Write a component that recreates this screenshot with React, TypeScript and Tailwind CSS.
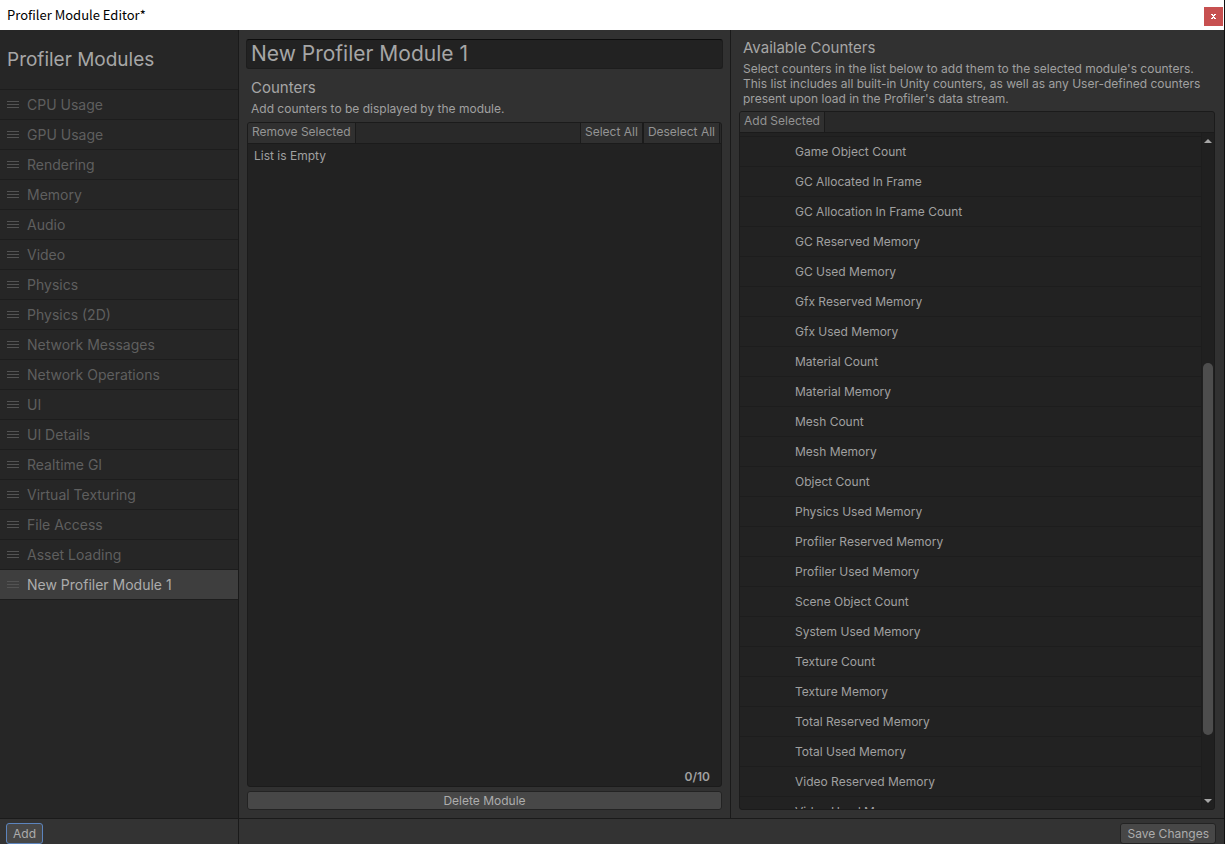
import { useState } from "react";

const builtInModules = [
  "CPU Usage",
  "GPU Usage",
  "Rendering",
  "Memory",
  "Audio",
  "Video",
  "Physics",
  "Physics (2D)",
  "Network Messages",
  "Network Operations",
  "UI",
  "UI Details",
  "Realtime GI",
  "Virtual Texturing",
  "File Access",
  "Asset Loading",
];

const counters = [
  "Game Object Count",
  "GC Allocated In Frame",
  "GC Allocation In Frame Count",
  "GC Reserved Memory",
  "GC Used Memory",
  "Gfx Reserved Memory",
  "Gfx Used Memory",
  "Material Count",
  "Material Memory",
  "Mesh Count",
  "Mesh Memory",
  "Object Count",
  "Physics Used Memory",
  "Profiler Reserved Memory",
  "Profiler Used Memory",
  "Scene Object Count",
  "System Used Memory",
  "Texture Count",
  "Texture Memory",
  "Total Reserved Memory",
  "Total Used Memory",
  "Video Reserved Memory",
  "Video Used Memory",
];

function DragHandle() {
  return (
    <svg width="12" height="7" viewBox="0 0 12 7" className="shrink-0" aria-hidden="true">
      <path d="M0 .5h12M0 3.5h12M0 6.5h12" stroke="#535353" strokeWidth="1" />
    </svg>
  );
}

function TitleBar() {
  return (
    <header className="flex h-[30px] shrink-0 items-center justify-between bg-white pr-px pl-[7px]">
      <h1 className="font-['Noto_Sans_CJK_SC','Noto_Sans',sans-serif] text-[13px] leading-4 text-black">
        Profiler Module Editor*
      </h1>
      <button
        type="button"
        aria-label="Close"
        className="mt-[3px] flex h-[19px] w-[19px] items-center justify-center bg-[#c75050]"
      >
        <svg width="5" height="5" viewBox="0 0 5 5" shapeRendering="crispEdges" aria-hidden="true">
          <path d="M0 0h2v1h1V0h2v1H4v1H3v1h1v1h1v1H3V4H2v1H0V4h1V3h1V2H1V1H0z" fill="#fff" />
        </svg>
      </button>
    </header>
  );
}

function Sidebar({ name }: { name: string }) {
  return (
    <nav className="flex w-[239px] shrink-0 flex-col border-r border-[#1a1a1a] bg-[#262626]">
      <h2 className="flex h-[60px] items-center border-b border-[#1d1d1d] pt-0.5 pl-[7px] text-[19px] text-[#a6a6a6]">
        Profiler Modules
      </h2>
      <ul>
        {builtInModules.map((m) => (
          <li
            key={m}
            className="flex h-[30px] items-center gap-2 border-b border-[#1d1d1d] pl-[7px] text-[14px] text-[#5f5f5f]"
          >
            <DragHandle />
            {m}
          </li>
        ))}
        <li className="flex h-[30px] items-center gap-2 border-b border-[#1d1d1d] bg-[#3e3e3e] pl-[7px] text-[14px] text-[#acacac]">
          <DragHandle />
          {name}
        </li>
      </ul>
    </nav>
  );
}

function ModuleDetails({ name, onRename }: { name: string; onRename: (v: string) => void }) {
  return (
    <section className="flex min-w-0 flex-[492] flex-col border-r border-[#1a1a1a] bg-[#313131] px-2 pt-[9px] pb-2">
      <input
        aria-label="Module name"
        value={name}
        onChange={(e) => onRename(e.target.value)}
        className="-mx-px h-[30px] shrink-0 rounded-[3px] border border-[#1d1d1d] border-t-[#0d0d0d] bg-[#222222] px-1 text-[21px] text-[#a6a6a6] outline-none"
      />
      <h2 className="mt-[9px] pl-1 text-[15px] leading-5 text-[#a6a6a6]">Counters</h2>
      <p className="mt-[3px] mb-1.5 pl-1 text-[12px] leading-[15px] text-[#a0a0a0]">
        Add counters to be displayed by the module.
      </p>
      <div className="flex min-h-0 flex-1 flex-col overflow-hidden rounded-[3px] border border-[#1b1b1b] bg-[#222222]">
        <div className="flex h-[21px] shrink-0 border-b border-[#1b1b1b] bg-[#292929] pr-px text-[12px] leading-[18px] text-[#949494]">
          <button type="button" className="border-r border-[#1b1b1b] bg-[#303030] px-1 pb-0.5">
            Remove Selected
          </button>
          <button type="button" className="ml-auto border-x border-[#1b1b1b] bg-[#303030] px-1 pb-0.5">
            Select All
          </button>
          <button type="button" className="border-x border-[#1b1b1b] bg-[#303030] px-1 pb-0.5">
            Deselect All
          </button>
        </div>
        <p className="flex-1 px-1.5 pt-1 text-[12px] leading-4 text-[#a0a0a0]">List is Empty</p>
        <p className="pr-[11px] pb-px text-right text-[12px] leading-4 font-semibold text-[#a0a0a0]">0/10</p>
      </div>
      <button
        type="button"
        className="mt-1 h-[19px] shrink-0 rounded-[3px] border border-[#232323] bg-[#474747] text-[12px] leading-4 text-[#acacac]"
      >
        Delete Module
      </button>
    </section>
  );
}

function AvailableCounters() {
  return (
    <section className="flex min-w-0 flex-[493] flex-col bg-[#313131] pt-2 pr-[9px] pb-2 pl-2">
      <h2 className="pl-1 text-[15px] leading-5 text-[#a6a6a6]">Available Counters</h2>
      <p className="mt-[3px] mb-[5px] pl-1 text-[12px] leading-[15px] text-[#a0a0a0]">
        Select counters in the list below to add them to the selected module's counters. This list includes all
        built-in Unity counters, as well as any User-defined counters present upon load in the Profiler's data stream.
      </p>
      <div className="flex min-h-0 flex-1 flex-col overflow-hidden rounded-[3px] border border-[#1b1b1b] bg-[#222222]">
        <div className="flex h-[21px] shrink-0 border-b border-[#1b1b1b] bg-[#292929] text-[12px] leading-[18px] text-[#949494]">
          <button type="button" className="border-r border-[#1b1b1b] bg-[#303030] px-1 pb-0.5">
            Add Selected
          </button>
        </div>
        <div className="flex min-h-0 flex-1">
          <ul className="min-w-0 flex-1 overflow-hidden">
            <li className="h-1 border-b border-[#1d1d1d]" />
            {counters.map((c) => (
              <li
                key={c}
                className="flex h-[30px] items-center border-b border-[#1d1d1d] pl-[55px] text-[12px] text-[#a0a0a0]"
              >
                {c}
              </li>
            ))}
          </ul>
          <div className="flex w-[13px] shrink-0 flex-col items-center border-l border-[#1d1d1d] bg-[#202020] py-1.5">
            <svg width="8" height="4" viewBox="0 0 8 4" className="shrink-0" aria-hidden="true">
              <path d="M4 0l4 4H0z" fill="#a6a6a6" />
            </svg>
            <div className="flex w-full flex-1 flex-col items-center">
              <div className="flex-[219]" />
              <div className="w-[10px] flex-[371] rounded-full bg-[#4d4d4d]" />
              <div className="flex-[64]" />
            </div>
            <svg width="8" height="4" viewBox="0 0 8 4" className="shrink-0" aria-hidden="true">
              <path d="M0 0h8L4 4z" fill="#a6a6a6" />
            </svg>
          </div>
        </div>
      </div>
    </section>
  );
}

export default function App() {
  const [name, setName] = useState("New Profiler Module 1");
  return (
    <div className="flex h-screen flex-col overflow-hidden border-r border-[#101010] bg-[#333333] font-['Inter',sans-serif]">
      <TitleBar />
      <main className="flex min-h-0 flex-1">
        <Sidebar name={name} />
        <ModuleDetails name={name} onRename={setName} />
        <AvailableCounters />
      </main>
      <footer className="flex h-[26px] shrink-0 border-t border-[#1a1a1a] text-[12px] leading-[18px]">
        <div className="w-[239px] shrink-0 border-r border-[#1a1a1a] pt-1 pl-1.5">
          <button
            type="button"
            className="h-[21px] rounded-[3px] border border-[#5c84bd] bg-[#474747] px-1.5 text-[#acacac]"
          >
            Add
          </button>
        </div>
        <div className="flex flex-1 justify-end pt-1 pr-2">
          <button
            type="button"
            className="h-[21px] rounded-[3px] border border-[#232323] bg-[#474747] px-1.5 text-[#acacac]"
          >
            Save Changes
          </button>
        </div>
      </footer>
    </div>
  );
}
